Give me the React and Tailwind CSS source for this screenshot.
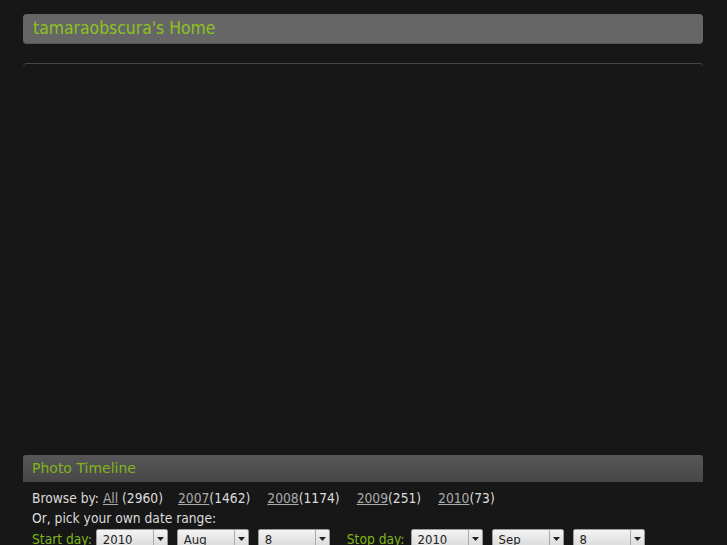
import React from "react";

const years = [
  { y: "2007", n: 1462 },
  { y: "2008", n: 1174 },
  { y: "2009", n: 251 },
  { y: "2010", n: 73 },
];

function Select({ value }) {
  return (
    <div className="flex h-[20px] w-[72px] rounded-[2px] border border-[#9a9a9a] bg-gradient-to-b from-[#f4f4f4] to-[#d8d8d8] text-[13px] text-[#222]">
      <div className="flex-1 pl-[6px] leading-[19px]">{value}</div>
      <div className="flex w-[14px] items-center justify-center border-l border-[#aaa]">
        <svg width="7" height="4" viewBox="0 0 7 4">
          <path d="M0 0 H7 L3.5 4 Z" fill="#222" />
        </svg>
      </div>
    </div>
  );
}

export default function App() {
  return (
    <div
      className="min-h-[545px] bg-[#171717] px-[23px] pt-[14px] text-[#dcdcdc]"
      style={{ fontFamily: '"DejaVu Sans", Verdana, sans-serif' }}
    >
      <div className="flex h-[30px] w-[680px] items-center rounded-[4px] border-b border-[#575757] bg-[#666666] pl-[10px]">
        <h1
          className="pt-[1px] text-[17.4px] leading-none text-[#8cc21e]"
          style={{ fontFamily: '"DejaVu Sans Condensed", "DejaVu Sans", sans-serif' }}
        >
          tamaraobscura's Home
        </h1>
      </div>

      <div className="mt-[19px] h-[388px] w-[680px] rounded-t-[4px] border-t border-[#474747]"></div>

      <div className="mt-[4px] w-[680px]">
        <div className="flex h-[27px] items-center rounded-t-[3px] bg-gradient-to-b from-[#575757] to-[#474747] pl-[9px]">
          <h2 className="text-[14px] text-[#7fb51c]">Photo Timeline</h2>
        </div>
        <div
          className="px-[9px] pt-[6px] text-[13.7px]"
          style={{ fontFamily: '"DejaVu Sans Condensed", "DejaVu Sans", sans-serif' }}
        >
          <div className="flex h-[20px] items-center gap-[17px]">
            <span className="mr-[-2px]">
              Browse by: <a className="text-[#aaaaaa] underline">All</a> (2960)
            </span>
            {years.map((y) => (
              <span key={y.y}>
                <a className="text-[#aaaaaa] underline">{y.y}</a>({y.n})
              </span>
            ))}
          </div>
          <div className="flex h-[20px] items-center">Or, pick your own date range:</div>
          <div className="mt-[1px] flex items-center">
            <span className="mr-[4px] text-[#7fb51c]">Start day:</span>
            <div className="flex gap-[9px]">
              <Select value="2010" />
              <Select value="Aug" />
              <Select value="8" />
            </div>
            <span className="ml-[17px] mr-[6px] text-[#7fb51c]">Stop day:</span>
            <div className="flex gap-[9px]">
              <Select value="2010" />
              <Select value="Sep" />
              <Select value="8" />
            </div>
          </div>
        </div>
      </div>
    </div>
  );
}
